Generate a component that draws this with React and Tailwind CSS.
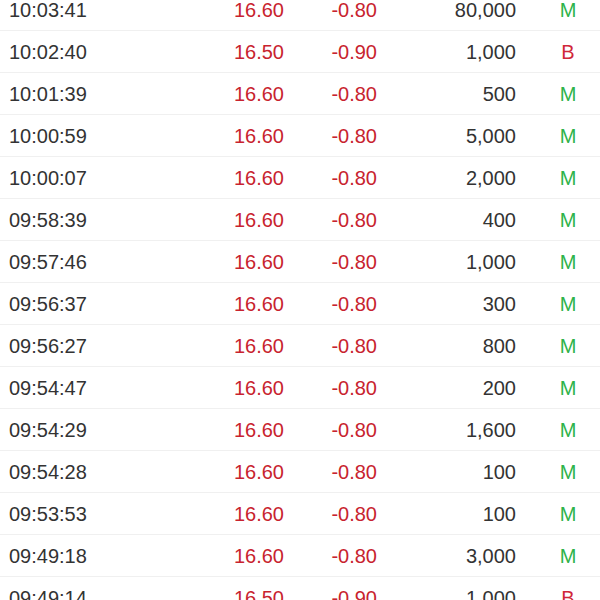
import React from "react";

const trades = [
  ["10:03:41", "16.60", "-0.80", "80,000", "M"],
  ["10:02:40", "16.50", "-0.90", "1,000", "B"],
  ["10:01:39", "16.60", "-0.80", "500", "M"],
  ["10:00:59", "16.60", "-0.80", "5,000", "M"],
  ["10:00:07", "16.60", "-0.80", "2,000", "M"],
  ["09:58:39", "16.60", "-0.80", "400", "M"],
  ["09:57:46", "16.60", "-0.80", "1,000", "M"],
  ["09:56:37", "16.60", "-0.80", "300", "M"],
  ["09:56:27", "16.60", "-0.80", "800", "M"],
  ["09:54:47", "16.60", "-0.80", "200", "M"],
  ["09:54:29", "16.60", "-0.80", "1,600", "M"],
  ["09:54:28", "16.60", "-0.80", "100", "M"],
  ["09:53:53", "16.60", "-0.80", "100", "M"],
  ["09:49:18", "16.60", "-0.80", "3,000", "M"],
  ["09:49:14", "16.50", "-0.90", "1,000", "B"],
];

export default function App() {
  return (
    <div className="h-[600px] w-[600px] overflow-hidden bg-white font-['Liberation_Sans',Arial,sans-serif] text-[20px]">
      <div className="-mt-[11px]">
        {trades.map(([time, price, change, volume, side]) => (
          <div
            key={time + volume}
            className="grid h-[42px] grid-cols-[200px_84px_93px_139px_1fr] items-center border-b border-[#f0f0f0]"
          >
            <span className="pl-[9px] text-[#333333]">{time}</span>
            <span className="text-right text-[#c8232e]">{price}</span>
            <span className="text-right text-[#c8232e]">{change}</span>
            <span className="text-right text-[#333333]">{volume}</span>
            <span className={"pl-[20px] text-center " + (side === "B" ? "text-[#d0283a]" : "text-[#2db34a]")}>
              {side}
            </span>
          </div>
        ))}
      </div>
    </div>
  );
}
